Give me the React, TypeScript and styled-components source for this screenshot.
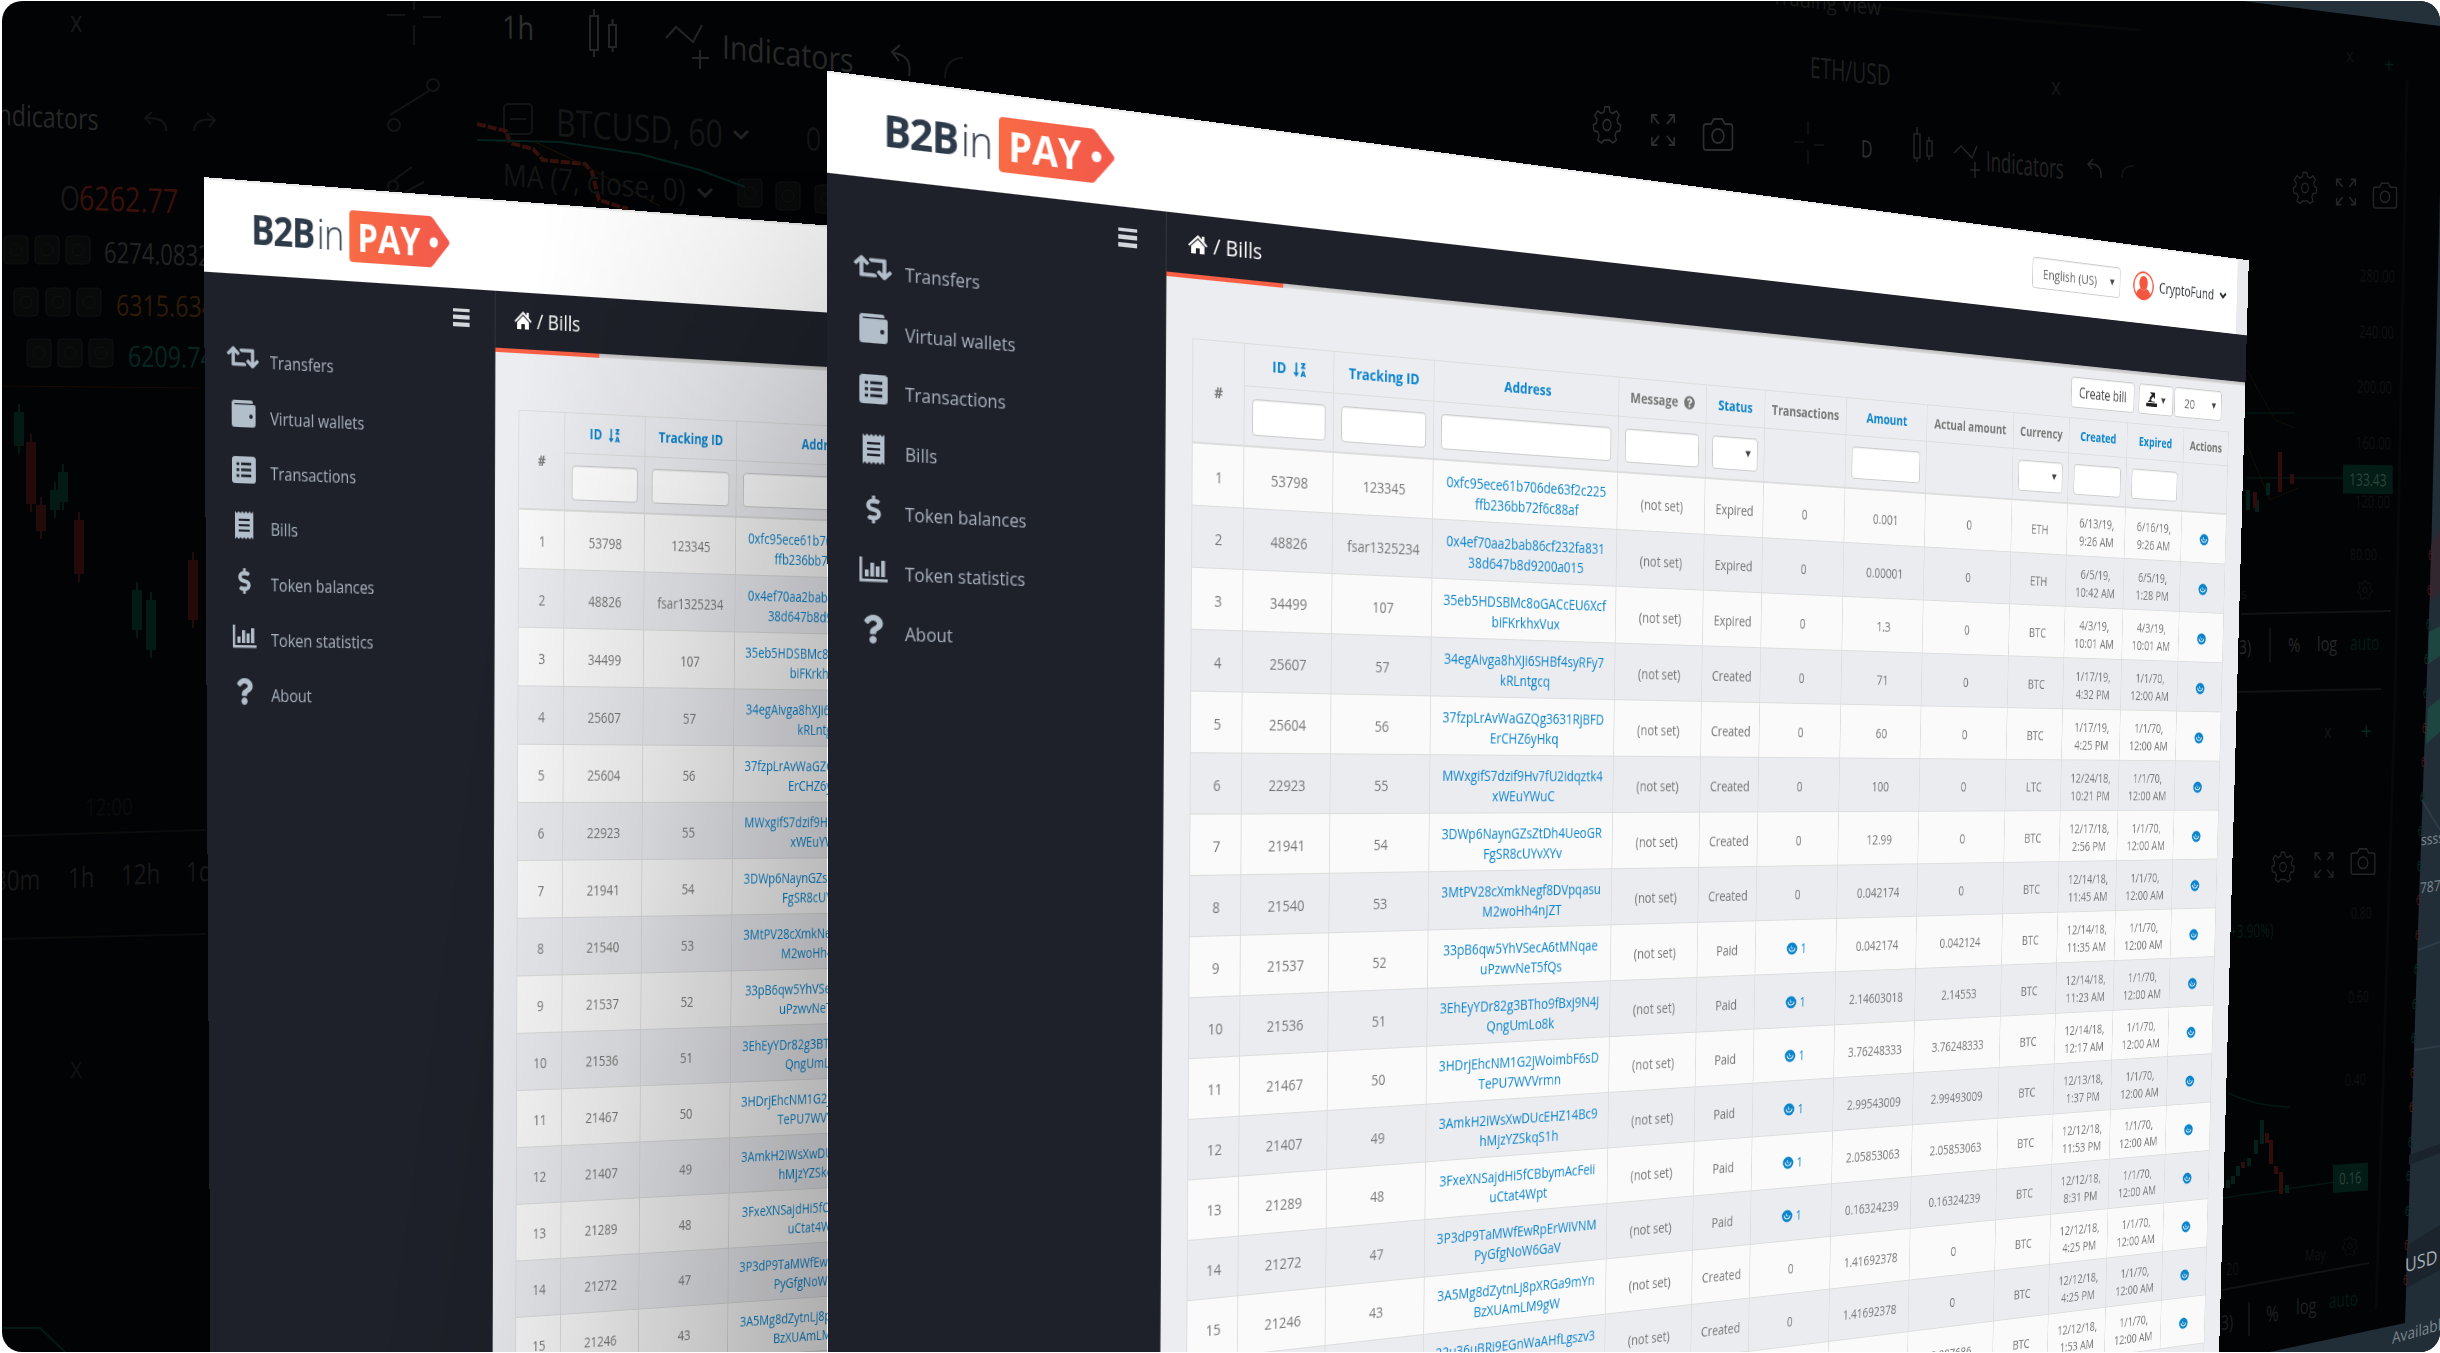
import React from "react";
import styled, { createGlobalStyle, css } from "styled-components";
import { FaRetweet, FaDollarSign, FaQuestion, FaSortAlphaDownAlt, FaQuestionCircle } from "react-icons/fa";

const GlobalStyle = createGlobalStyle`
  *, *::before, *::after { box-sizing: border-box; }
  html, body { margin: 0; padding: 0; background: #fff; overflow: hidden; }
`;

const FONT = `"Open Sans", "Noto Sans", sans-serif`;
const LINK = "#0b84cc";

/* ---------- perspective ---------- */

type Pt = [number, number];

/** Builds the matrix3d that carries the rectangle (x, y, w, h) onto a quad given clockwise from its top left. */
function project(x: number, y: number, w: number, h: number, q: [Pt, Pt, Pt, Pt]): string {
  const [p0, p1, p2, p3] = q;
  const dx1 = p1[0] - p2[0], dx2 = p3[0] - p2[0], sx = p0[0] - p1[0] + p2[0] - p3[0];
  const dy1 = p1[1] - p2[1], dy2 = p3[1] - p2[1], sy = p0[1] - p1[1] + p2[1] - p3[1];
  const det = dx1 * dy2 - dx2 * dy1;
  const g = (sx * dy2 - dx2 * sy) / det;
  const k = (dx1 * sy - sx * dy1) / det;
  const row = (c1: number, c3: number, c0: number) => {
    const u = (c1 * (1 + g) - c0) / w;
    const v = (c3 * (1 + k) - c0) / h;
    return [u, v, c0 - u * x - v * y];
  };
  const X = row(p1[0], p3[0], p0[0]);
  const Y = row(p1[1], p3[1], p0[1]);
  const gu = g / w, kv = k / h;
  const s = 1 - gu * x - kv * y;
  const n = (value: number) => (value / s).toFixed(10);
  return `matrix3d(${n(X[0])},${n(Y[0])},0,${n(gu)},${n(X[1])},${n(Y[1])},0,${n(kv)},0,0,1,0,${n(X[2])},${n(Y[2])},0,1)`;
}

const FRONT = project(352, 294, 1346, 912, [[1191.8, 443.3], [2226, 515], [2205, 1295.3], [1185.8, 1421.6]]);
const BACK = project(0, 0, 724, 1092, [[203.5, 177.1], [826.8, 225.4], [813.2, 1297.7], [210.4, 1338.9]]);

/* ---------- stage ---------- */

const Stage = styled.main`
  position: relative;
  width: 2440px;
  height: 1353px;
  overflow: hidden;
  background: #020304;
  clip-path: inset(1px 0 1px 2px round 20px);
  font-family: ${FONT};
`;

const Window = styled.section<{ $matrix: string }>`
  position: absolute;
  left: 0;
  top: 0;
  width: 1724px;
  height: 1400px;
  display: flex;
  flex-direction: column;
  background: #ecedf1;
  transform-origin: 0 0;
  transform: ${(p) => p.$matrix};
`;

const Shade = styled.div`
  position: absolute;
  left: 203px;
  top: 170px;
  width: 624px;
  height: 1183px;
  background: linear-gradient(98deg, rgba(0, 0, 0, 0) 44%, rgba(0, 0, 0, 0.1) 68%, rgba(0, 0, 0, 0.3) 100%);
  mask-image: linear-gradient(to bottom, rgba(0, 0, 0, 0.45), #000 28%);
`;

/* ---------- window header ---------- */

const Header = styled.header`
  display: flex;
  height: 86px;
  flex: none;
  border-top: 2px solid #ececec;
`;

const HeaderMain = styled.div`
  flex: 1;
  display: flex;
  align-items: center;
  background: #fff;
  padding: 0 17px 0 51px;
`;

const HeaderGutter = styled.div`
  width: 18px;
  background: #e9eaee;
`;

const Logo = styled.div`
  display: flex;
  align-items: center;
  color: #2d3a49;
  font-size: 38px;
  line-height: 48px;
  margin-right: auto;
`;

const LogoBold = styled.span`
  width: 72px;
  margin-top: -3px;
  font-weight: 700;
  letter-spacing: -1.3px;
`;

const LogoLight = styled.span`
  width: 36px;
  margin-top: -2px;
  font-weight: 300;
  letter-spacing: -0.5px;
`;

const LogoTag = styled.span`
  position: relative;
  display: flex;
  align-items: center;
  width: 113px;
  height: 48px;
  margin-top: -1px;
  padding-left: 9px;
  color: #fff;
  font-size: 36.5px;
  font-weight: 700;
`;

const TagShape = styled.svg`
  position: absolute;
  inset: 0;
`;

const TagText = styled.span`
  position: relative;
`;

const fieldBox = css`
  height: 34px;
  border: 1px solid #ccc;
  border-radius: 4px;
  background: #fff;
  box-shadow: inset 0 1px 1px rgba(0, 0, 0, 0.07);
`;

const Select = styled.div<{ $width?: number; $size?: number }>`
  ${fieldBox}
  display: flex;
  align-items: center;
  justify-content: space-between;
  width: ${(p) => (p.$width ? `${p.$width}px` : "auto")};
  padding: 0 8px 0 15px;
  color: #666;
  font-size: ${(p) => p.$size ?? 14}px;
`;

const User = styled.div`
  display: flex;
  align-items: center;
  margin-left: 20px;
  gap: 9px;
  color: #2d3038;
  font-size: 16px;
`;

/* ---------- window body ---------- */

const Body = styled.div`
  display: flex;
  flex: 1;
`;

const Sidebar = styled.aside`
  display: flex;
  flex-direction: column;
  width: 325px;
  background: #1e2129;
  border-right: 1px solid #33363c;
`;

const SidebarTop = styled.div`
  display: flex;
  justify-content: flex-end;
  align-items: center;
  height: 54px;
  padding-right: 29px;
`;

const Burger = styled.div`
  display: flex;
  flex-direction: column;
  justify-content: space-between;
  width: 19px;
  height: 17px;
  span { height: 3.6px; background: #d3d6da; }
`;

const MenuItem = styled.div`
  display: flex;
  align-items: center;
  height: 51.8px;
  padding-left: 27px;
  color: #a9b3bf;
  font-size: 16px;
`;

const MenuIcon = styled.span`
  display: flex;
  justify-content: center;
  width: 29px;
  margin: -6px 15px 0 0;
  color: #b3becb;
`;

const Content = styled.div`
  display: flex;
  flex-direction: column;
  flex: 1;
`;

const Crumbs = styled.div`
  display: flex;
  align-items: center;
  gap: 6px;
  height: 54px;
  padding: 0 0 2px 22px;
  background: #1e2129;
  color: #fff;
  font-size: 20.5px;
`;

const Underline = styled.div`
  height: 4px;
  background: linear-gradient(to right, #f85f45 122px, transparent 122px), linear-gradient(#bdbdbd, #dcdcdd);
`;

const Toolbar = styled.div`
  display: flex;
  justify-content: flex-end;
  gap: 7px;
  padding: 9px 38px 0 0;
`;

const ToolPair = styled.div`
  display: flex;
  gap: 2px;
`;

const ToolButton = styled.div`
  ${fieldBox}
  display: flex;
  align-items: center;
  justify-content: center;
  gap: 6px;
  min-width: 53px;
  padding: 0 11px;
  color: #444;
  font-size: 15.5px;
`;

/* ---------- table ---------- */

const COLUMNS = "54px 96px 112px 218.5px 110.5px 75.5px 109.5px 112px 125px 83px 89px 89px 72px";

const Table = styled.div`
  display: flex;
  flex-direction: column;
  width: 1347px;
  margin: 11px 0 0 27px;
  border: solid #ddd;
  border-width: 1px 0 0 1px;
`;

const Row = styled.div<{ $odd?: boolean }>`
  display: grid;
  grid-template-columns: ${COLUMNS};
  height: 57px;
  background: ${(p) => (p.$odd ? "#fafafa" : "#ebecf0")};
`;

const HeadRow = styled.div`
  display: grid;
  grid-template-columns: ${COLUMNS};
  grid-template-rows: 39px 56px;
`;

const Cell = styled.div<{ $link?: boolean }>`
  display: flex;
  align-items: center;
  justify-content: center;
  gap: 4px;
  padding: 3px 7px 0 9px;
  border: solid #ddd;
  border-width: 0 1px 1px 0;
  color: ${(p) => (p.$link ? LINK : "#777")};
  font-size: 14px;
  line-height: 20px;
  text-align: center;
  white-space: nowrap;
`;

const HeadCell = styled(Cell)<{ $tall?: boolean }>`
  grid-row: ${(p) => (p.$tall ? "1 / 3" : "auto")};
  padding: 0;
  gap: 7px;
  border-bottom-width: ${(p) => (p.$tall ? 2 : 1)}px;
  font-weight: 700;
`;

const FilterCell = styled(Cell)`
  padding: 1px 8px 0;
  border-bottom-width: 2px;
`;

const Input = styled.div`
  ${fieldBox}
  flex: 1;
`;

const FilterSelect = styled(Select)`
  flex: 1;
  justify-content: flex-end;
`;

/* ---------- icons ---------- */

const Caret = () => (
  <svg width="7" height="7" viewBox="0 0 7 7"><path d="M0 .5h7L3.5 7z" fill="#444" /></svg>
);

const Avatar = () => (
  <svg width="32" height="32" viewBox="0 0 32 32">
    <circle cx="16" cy="16" r="15" fill="#fff" stroke="#f4573f" strokeWidth="2" />
    <ellipse cx="16" cy="13" rx="6.6" ry="8" fill="#f4573f" />
    <path d="M5 26c1-5 4-6 7-7 2 3 6 3 8 0 3 1 6 2 7 7a15 15 0 0 1-22 0z" fill="#f4573f" />
  </svg>
);

const Home = () => (
  <svg width="20" height="19" viewBox="0 0 18 18" preserveAspectRatio="none">
    <path d="M9 1 0 9.6l1.2 1.2L9 3.6l7.8 7.2L18 9.6l-3-2.9V2h-2.3v2.5z" fill="#fff" />
    <path d="M9 5 2.8 10.7V17H7.2v-4.6h3.6V17h4.4v-6.3z" fill="#fff" />
  </svg>
);

const Eye = () => (
  <svg width="15" height="14" viewBox="0 0 15 14">
    <ellipse cx="7.5" cy="7" rx="7" ry="6.4" fill={LINK} />
    <path d="M3.4 6.400c.8 4.800 7.200 4.800 8.200 0" fill="none" stroke="#fff" strokeWidth="1.2" />
    <path d="M6.400 4.400c-.8 2.600 1.600 3.400 2.400 2" fill="none" stroke="#fff" strokeWidth="1" />
  </svg>
);

const Export = () => (
  <svg width="17" height="18" viewBox="0 0 17 18" fill="#222">
    <path d="M0 13h17v4H0zM3 11l3-2 3 2h4v1H3zM5 1h8v7l-2.6-2.4-4 4.4-2-2 4-4.400z" />
  </svg>
);

const Wallet = () => (
  <svg width="26" height="25" viewBox="0 0 26 25">
    <path d="M3 0h18a2 2 0 0 1 2 2v1H4v1h20a2 2 0 0 1 2 2v16a3 3 0 0 1-3 3H3a3 3 0 0 1-3-3V3a3 3 0 0 1 3-3z" fill="#b3becb" />
    <path d="M3 3.600h20" stroke="#1e2129" strokeWidth="1" />
    <circle cx="21" cy="15" r="1.900" fill="#1e2129" />
  </svg>
);

const ListIcon = () => (
  <svg width="26" height="25" viewBox="0 0 26 25">
    <rect width="26" height="25" rx="3" fill="#b3becb" />
    <path d="M5 7h3M5 12.500h3M5 18h3M10 7h11M10 12.500h11M10 18h11" stroke="#1e2129" strokeWidth="2.600" />
  </svg>
);

const Receipt = () => (
  <svg width="20" height="26" viewBox="0 0 20 26">
    <path d="M0 0l2 2 2-2 2 2 2-2 2 2 2-2 2 2 2-2 2 2 2-2v26l-2-2-2 2-2-2-2 2-2-2-2 2-2-2-2 2-2-2-2 2z" fill="#b3becb" />
    <path d="M4 8h12M4 13h12M4 18h12" stroke="#1e2129" strokeWidth="2" />
  </svg>
);

const Bars = () => (
  <svg width="26" height="22" viewBox="0 0 26 22" fill="#b3becb">
    <path d="M0 0h2.500v19H26v2.500H0zM5 11h3.500v6H5zM10 5h3.500v12H10zM15 8h3.500v9H15zM20 3h3.500v14H20z" />
  </svg>
);

/* ---------- data ---------- */

const MENU: [React.ReactNode, string][] = [
  [<FaRetweet size={35} style={{ flex: "none", transform: "scaleY(0.92)" }} />, "Transfers"],
  [<Wallet />, "Virtual wallets"],
  [<ListIcon />, "Transactions"],
  [<Receipt />, "Bills"],
  [<FaDollarSign size={24} />, "Token balances"],
  [<Bars />, "Token statistics"],
  [<FaQuestion size={25} />, "About"],
];

type Bill = [string, string, string, string, string, string, string, string, string, string, string];

const UNSET = "1/1/70,|12:00 AM";

/** id, tracking id, address, status, transactions, amount, actual amount, currency, created, expired, link flag */
const BILLS: Bill[] = [
  ["53798", "123345", "0xfc95ece61b706de63f2c225|ffb236bb72f6c88af", "Expired", "0", "0.001", "0", "ETH", "6/13/19,|9:26 AM", "6/16/19,|9:26 AM", ""],
  ["48826", "fsar1325234", "0x4ef70aa2bab86cf232fa831|38d647b8d9200a015", "Expired", "0", "0.00001", "0", "ETH", "6/5/19,|10:42 AM", "6/5/19,|1:28 PM", ""],
  ["34499", "107", "35eb5HDSBMc8oGACcEU6Xcf|biFKrkhxVux", "Expired", "0", "1.3", "0", "BTC", "4/3/19,|10:01 AM", "4/3/19,|10:01 AM", ""],
  ["25607", "57", "34egAivga8hXJi6SHBf4syRFy7|kRLntgcq", "Created", "0", "71", "0", "BTC", "1/17/19,|4:32 PM", UNSET, ""],
  ["25604", "56", "37fzpLrAvWaGZQg3631RjBFD|ErCHZ6yHkq", "Created", "0", "60", "0", "BTC", "1/17/19,|4:25 PM", UNSET, ""],
  ["22923", "55", "MWxgifS7dzif9Hv7fU2idqztk4|xWEuYWuC", "Created", "0", "100", "0", "LTC", "12/24/18,|10:21 PM", UNSET, ""],
  ["21941", "54", "3DWp6NaynGZsZtDh4UeoGR|FgSR8cUYvXYv", "Created", "0", "12.99", "0", "BTC", "12/17/18,|2:56 PM", UNSET, ""],
  ["21540", "53", "3MtPV28cXmkNegf8DVpqasu|M2woHh4nJZT", "Created", "0", "0.042174", "0", "BTC", "12/14/18,|11:45 AM", UNSET, ""],
  ["21537", "52", "33pB6qw5YhVSecA6tMNqae|uPzwvNeT5fQs", "Paid", "1", "0.042174", "0.042124", "BTC", "12/14/18,|11:35 AM", UNSET, "y"],
  ["21536", "51", "3EhEyYDr82g3BTho9fBxj9N4J|QngUmLo8k", "Paid", "1", "2.14603018", "2.14553", "BTC", "12/14/18,|11:23 AM", UNSET, "y"],
  ["21467", "50", "3HDrjEhcNM1G2jWoimbF6sD|TePU7WVVrmn", "Paid", "1", "3.76248333", "3.76248333", "BTC", "12/14/18,|12:17 AM", UNSET, "y"],
  ["21407", "49", "3AmkH2iWsXwDUcEHZ14Bc9|hMjzYZSkqS1h", "Paid", "1", "2.99543009", "2.99493009", "BTC", "12/13/18,|1:37 PM", UNSET, "y"],
  ["21289", "48", "3FxeXNSajdHi5fCBbymAcFeii|uCtat4Wpt", "Paid", "1", "2.05853063", "2.05853063", "BTC", "12/12/18,|11:53 PM", UNSET, "y"],
  ["21272", "47", "3P3dP9TaMWfEwRpErWiVNM|PyGfgNoW6GaV", "Paid", "1", "0.16324239", "0.16324239", "BTC", "12/12/18,|8:31 PM", UNSET, "y"],
  ["21246", "43", "3A5Mg8dZytnLj8pXRGa9mYn|BzXUAmLM9gW", "Created", "0", "1.41692378", "0", "BTC", "12/12/18,|4:25 PM", UNSET, ""],
  ["21245", "42", "22u36uBRj9EGnWaAHfLgszv3|kPqWcVbXe", "Created", "0", "1.41692378", "0", "BTC", "12/12/18,|4:25 PM", UNSET, ""],
  ["21240", "41", "3KmPdV7cXmkNegf8DVpqas|M2woHh4nJ", "Paid", "1", "0.987686", "0.987686", "BTC", "12/12/18,|1:53 AM", UNSET, "y"],
  ["21238", "40", "3MtPV28cXmkNegf8DVpqas|M2woHh4nJ", "Created", "0", "1", "0", "BTC", "12/12/18,|1:40 AM", UNSET, ""],
];

const HEADS: [string, boolean][] = [
  ["ID", true], ["Tracking ID", true], ["Address", true], ["Message", false], ["Status", true], ["Transactions", false],
  ["Amount", true], ["Actual amount", false], ["Currency", false], ["Created", true], ["Expired", true], ["Actions", false],
];

const FILTERS = ["input", "input", "input", "input", "select", "", "input", "", "select", "input", "input", ""];

const Lines = ({ text }: { text: string }) => (
  <span>
    {text.split("|").map((part, i) => (
      <React.Fragment key={i}>{i > 0 && <br />}{part}</React.Fragment>
    ))}
  </span>
);

const BillsTable = () => (
  <Table>
    <HeadRow>
      <HeadCell $tall>#</HeadCell>
      {HEADS.map(([label, link]) => (
        <HeadCell key={label} $link={link}>
          {label}
          {label === "ID" && <FaSortAlphaDownAlt size={15} />}
          {label === "Message" && <FaQuestionCircle size={14} />}
        </HeadCell>
      ))}
      {FILTERS.map((kind, i) => (
        <FilterCell key={i}>
          {kind === "input" && <Input />}
          {kind === "select" && <FilterSelect><Caret /></FilterSelect>}
        </FilterCell>
      ))}
    </HeadRow>
    {BILLS.map(([id, tracking, address, status, count, amount, actual, currency, created, expired, link], i) => (
      <Row key={id} $odd={i % 2 === 0}>
        <Cell>{i + 1}</Cell>
        <Cell>{id}</Cell>
        <Cell>{tracking}</Cell>
        <Cell $link><Lines text={address} /></Cell>
        <Cell>(not set)</Cell>
        <Cell>{status}</Cell>
        <Cell $link={!!link}>{link && <Eye />}{count}</Cell>
        <Cell>{amount}</Cell>
        <Cell>{actual}</Cell>
        <Cell>{currency}</Cell>
        <Cell><Lines text={created} /></Cell>
        <Cell><Lines text={expired} /></Cell>
        <Cell $link><Eye /></Cell>
      </Row>
    ))}
  </Table>
);

const BillsWindow = ({ matrix }: { matrix: string }) => (
  <Window $matrix={matrix}>
    <Header>
      <HeaderMain>
        <Logo>
          <LogoBold>B2B</LogoBold>
          <LogoLight>in</LogoLight>
          <LogoTag>
            <TagShape width="113" height="48" viewBox="0 0 113 48">
              <defs>
                <linearGradient id="tag" x1="0" x2="1"><stop offset="0" stopColor="#f96b45" /><stop offset="1" stopColor="#f2584b" /></linearGradient>
              </defs>
              <path d="M4 0h86q3 0 4.500 2.500L112 22q1.500 2 0 4L94.500 45.500Q93 48 90 48H4q-4 0-4-4V4q0-4 4-4z" fill="url(#tag)" />
              <circle cx="95" cy="24.500" r="4.800" fill="#fff" />
            </TagShape>
            <TagText>PAY</TagText>
          </LogoTag>
        </Logo>
        <Select $width={133} $size={15}>English (US)<Caret /></Select>
        <User>
          <Avatar />
          CryptoFund
          <svg width="11" height="8" viewBox="0 0 11 8"><path d="M1 1.500 5.500 6 10 1.500" fill="none" stroke="#23252c" strokeWidth="2.600" /></svg>
        </User>
      </HeaderMain>
      <HeaderGutter />
    </Header>
    <Body>
      <Sidebar>
        <SidebarTop><Burger><span /><span /><span /></Burger></SidebarTop>
        {MENU.map(([icon, label]) => (
          <MenuItem key={label}><MenuIcon>{icon}</MenuIcon>{label}</MenuItem>
        ))}
      </Sidebar>
      <Content>
        <Crumbs><Home /><span>/ Bills</span></Crumbs>
        <Underline />
        <Toolbar>
          <ToolButton>Create bill</ToolButton>
          <ToolPair>
            <ToolButton><Export /><Caret /></ToolButton>
            <Select $width={76} $size={15}>20<Caret /></Select>
          </ToolPair>
        </Toolbar>
        <BillsTable />
      </Content>
    </Body>
  </Window>
);

/* ---------- dim trading terminal behind the windows ---------- */

const Label = styled.span<{ $x: number; $y: number; $size: number; $color: string; $tilt?: number; $squeeze?: number }>`
  position: absolute;
  left: ${(p) => p.$x}px;
  top: ${(p) => p.$y}px;
  font-size: ${(p) => p.$size}px;
  line-height: 1;
  color: ${(p) => p.$color};
  white-space: pre;
  transform-origin: 0 50%;
  transform: translateY(-50%) skewY(${(p) => p.$tilt ?? 0}deg) scaleX(${(p) => p.$squeeze ?? 0.8});
`;

const PriceTag = styled(Label)`
  padding: 6px 9px;
  background: #031c16;
`;

const Backdrop = styled.svg`
  position: absolute;
  left: 0;
  top: 0;
`;

type Note = [string, number, number, number, string, number?, number?];

/** text, left, vertical centre, size, colour, tilt, horizontal squeeze */
const NOTES: Note[] = [
  ["x", 70, 21, 30, "#171a1a"],
  ["Indicators", -9, 113, 29, "#272828", 3, 0.8],
  ["O", 60, 197, 34, "#171919", 2, 0.75],
  ["6262.77", 79, 197, 34, "#3a100c", 2, 0.79],
  ["6274.0832", 104, 251, 29, "#222424", 2, 0.76],
  ["6315.634", 116, 304, 29, "#2f1b07", 1, 0.8],
  ["6209.747", 128, 355, 29, "#052722", 1, 0.8],
  ["1h", 502, 26, 32, "#2d2e2e", 4, 0.85],
  ["Indicators", 722, 46, 33, "#272828", 6, 0.86],
  ["BTCUSD, 60", 556, 121, 38, "#141616", 4, 0.8],
  ["O", 806, 138, 32, "#141616", 4, 0.6],
  ["MA (7, close, 0)", 503, 174, 31, "#141616", 5, 0.85],
  ["12:00", 85, 807, 24, "#0b0c0c", -1, 0.78],
  ["30m", -6, 880, 28, "#171818", -2, 0.8],
  ["1h", 68, 877, 28, "#171818", -2, 0.8],
  ["12h", 121, 874, 28, "#171818", -2, 0.8],
  ["1d", 186, 871, 28, "#171818", -2, 0.8],
  ["x", 70, 1067, 30, "#0f1111"],
  ["Trading View", 1772, -5, 22, "#1a1c1c", 6, 0.83],
  ["ETH/USD", 1810, 66, 29, "#1e2020", 6, 0.66],
  ["x", 2051, 86, 24, "#171919"],
  ["x", 2346, 55, 18, "#101212"],
  ["+", 2384, 63, 22, "#042017"],
  ["D", 1861, 148, 24, "#2f3131", 6, 0.66],
  ["Indicators", 1986, 160, 28, "#222424", 6, 0.6],
  ["280.00", 2360, 275, 17, "#101212", 2, 0.66],
  ["240.00", 2359, 331, 17, "#101212", 2, 0.66],
  ["200.00", 2357, 386, 17, "#101212", 2, 0.66],
  ["160.00", 2356, 442, 17, "#101212", 2, 0.66],
  ["120.00", 2355, 501, 17, "#101212", 1, 0.66],
  ["80.00", 2350, 554, 16, "#101212", 1, 0.66],
  ["s", 2241, 593, 15, "#101212"],
  ["3)", 2239, 647, 20, "#252727", 0, 0.7],
  ["%", 2288, 645, 20, "#252727", 0, 0.75],
  ["log", 2317, 644, 20, "#252727", 0, 0.72],
  ["auto", 2350, 643, 20, "#031c14", 0, 0.7],
  ["x", 2324, 731, 18, "#131515"],
  ["+", 2361, 731, 24, "#042a1e"],
  ["+3.90%)", 2230, 931, 18, "#031c16", -2, 0.66],
  ["0.80", 2351, 913, 16, "#101212", -2, 0.66],
  ["0.60", 2348, 997, 16, "#101212", -3, 0.66],
  ["0.40", 2345, 1080, 16, "#101212", -4, 0.66],
  ["May", 2305, 1255, 16, "#111313", -4, 0.66],
  ["20", 2226, 1269, 17, "#111313", -4, 0.66],
  ["3)", 2221, 1323, 20, "#1f2121", -5, 0.7],
  ["%", 2266, 1313, 22, "#1f2121", -5, 0.7],
  ["log", 2296, 1307, 21, "#1f2121", -5, 0.7],
  ["auto", 2329, 1301, 20, "#031c14", -5, 0.68],
];

const Gear = ({ x, y, s, c }: { x: number; y: number; s: number; c: string }) => (
  <g transform={`translate(${x} ${y}) scale(${s * 0.72} ${s})`} fill="none" stroke={c} strokeWidth="1.800">
    <path d="M-3-19h6l1 5 4 2 5-3 4 5-3 4 1 4 4 2-1 6-5 1-2 4 2 5-5 3-4-3h-8l-4 3-5-3 2-5-2-4-5-1-1-6 4-2 1-4-3-4 4-5 5 3 4-2z" transform="scale(1 .95)" />
    <circle r="5.500" />
  </g>
);

const Expand = ({ x, y, s, c }: { x: number; y: number; s: number; c: string }) => (
  <g transform={`translate(${x} ${y}) scale(${s * 0.8} ${s})`} fill="none" stroke={c} strokeWidth="2">
    <path d="M-14-7v-8h7M-14-15l9 9M14-7v-8H7M14-15l-9 9M-14 7v8h7M-14 15l9-9M14 7v8H7M14 15 5 6" />
  </g>
);

const Camera = ({ x, y, s, c }: { x: number; y: number; s: number; c: string }) => (
  <g transform={`translate(${x} ${y}) scale(${s * 0.85} ${s})`} fill="none" stroke={c} strokeWidth="2">
    <path d="M-14-11h6l3-5H5l3 5h6q3 0 3 3v20q0 3-3 3h-28q-3 0-3-3V-8q0-3 3-3z" /><circle cy="1" r="7" />
  </g>
);

const Candle = ({ x, y, h, up }: { x: number; y: number; h: number; up?: boolean }) => (
  <g fill={up ? "#031a15" : "#240a08"}>
    <rect x={x} y={y} width="10" height={h} />
    <rect x={x + 4} y={y - 8} width="2" height={h + 16} />
  </g>
);

const Terminal = () => (
  <>
    <Backdrop width="2440" height="1353" viewBox="0 0 2440 1353">
      <path d="M2235 0H2440V26z" fill="#24313b" />
      <path d="M2440 190 2431 560 2419 900 2405 1323 2265 1353H2440z" fill="#212e38" />
      <path d="M2431 545 2440 530v60l-10 14z" fill="#33272f" />
      <path d="M2429 632l11-6v30l-12 8zM2428 708l12-10v34l-14 12z" fill="#1d4640" />
      <path d="M2422 800 2440 830M2418 950l22-8M2415 1050l25-4" stroke="#2d3c46" strokeWidth="2" />
      <path d="M2409 1155l31-11v9l-31 12z" fill="#1a232b" />
      <path d="M2407 1245l33-20v45l-34 18z" fill="#1b242c" />
      <g fill="none" stroke="#242626" strokeWidth="2">
        <path d="M590 16h8v34h-8zM594 9v7M594 50v7M609 25h7v22h-7zM612.500 19v6M612.500 47v5M666 38l10-11 17 15 9-17M700 50v19M692 58h17M909 76q4-22-17-23M900 45l-8 7 7 9" />
        <path d="M1914 134h6v24h-6zM1917 127v7M1917 158v4M1927 141h5v15h-5zM1929 137v4M1929 156v4M1954 153l7-7 11 12 5-12M1975 162v16M1970 170h10M2101 178q1-15-12-14M2093 159l-5 5 4 5" strokeWidth="1.500" />
      </g>
      <g fill="none" stroke="#121515" strokeWidth="2">
        <path d="M387 15h18M423 17h18M414 0v10M414 25v20M390 115l39-24M166 131q1-14-20-13M152 112l-7 6 6 6M194 131q1-14 20-11M207 113l8 7-6 7M945 78q0-20 18-20" />
        <circle cx="394" cy="125" r="6" /><circle cx="433" cy="85" r="6" />
        <rect x="504" y="104" width="28" height="30" rx="4" /><path d="M510 119h16M394 180l18-13M402 194l22-12" />
        <circle cx="393" cy="186" r="5" />
        <path d="M734 131l7 7 7-7M698 189l7 7 7-7" stroke="#202323" strokeWidth="3" />
        <path d="M1794 142h10M1814 145h10M1808 121v14M1808 150v14M2122 178q0-13 12-12" strokeWidth="1.500" />
      </g>
      <g fill="#080a0a" stroke="#101212">
        {[[4, 250], [35, 250], [66, 250], [14, 302], [46, 302], [77, 302], [27, 353], [58, 353], [89, 353], [738, 193], [776, 196], [815, 199]].map(([x, y]) => (
          <g key={`${x}-${y}`}><rect x={x} y={y - 14} width="24" height="28" rx="4" /><circle cx={x + 12} cy={y} r="6" /></g>
        ))}
      </g>
      <path d="M0 386 200 388" stroke="#1a0a05" />
      <path d="M477 124 506 131 510 143 533 149 543 160 585 164 592 172 599 200 628 209" fill="none" stroke="#36100b" strokeWidth="4" strokeDasharray="9 2" />
      <path d="M477 140 560 142 640 154 700 170 745 187" fill="none" stroke="#04221e" strokeWidth="2" />
      <path d="M533 141 580 163 660 206" fill="none" stroke="#1f1305" />
      <Candle x={14} y={412} h={34} up /><Candle x={26} y={442} h={62} /><Candle x={36} y={505} h={26} />
      <Candle x={50} y={490} h={20} up /><Candle x={58} y={472} h={30} up /><Candle x={74} y={520} h={54} />
      <Candle x={132} y={590} h={40} up /><Candle x={146} y={600} h={50} up /><Candle x={188} y={560} h={60} />
      <path d="M0 836 206 830M0 939 206 934" stroke="#0b0d0d" strokeWidth="2" />
      <path d="M2 1328h38l26 25" fill="none" stroke="#021a15" strokeWidth="2" />
      <Gear x={1607} y={125} s={1} c="#2c2d2d" /><Expand x={1663} y={130} s={1} c="#2c2d2d" /><Camera x={1718} y={135} s={1} c="#2c2d2d" />
      <Gear x={2305} y={188} s={0.860} c="#242626" /><Expand x={2346} y={192} s={0.840} c="#242626" /><Camera x={2385} y={196} s={0.800} c="#242626" />
      <Gear x={2283} y={867} s={0.820} c="#242626" /><Expand x={2324} y={865} s={0.800} c="#242626" /><Camera x={2363} y={862} s={0.820} c="#242626" />
      <Gear x={2365} y={590} s={0.520} c="#121414" /><Gear x={2350} y={1246} s={0.520} c="#121414" />
      <path d="M2241 614 2391 611M2236 692 2381 689M2222 1290 2369 1263M2270 628v34M2249 1302v34" fill="none" stroke="#101313" strokeWidth="2" />
      <path d="M2247 370 2275 420 2295 428M2247 445 2270 500 2298 488" fill="none" stroke="#150d04" />
      <path d="M2247 413h48M2247 478h100M2222 1198 2335 1182M2228 1093q30 14 62 14" fill="none" stroke="#031713" strokeWidth="1.500" />
      <path d="M2248 490v20M2257 500v12M2268 483v12" stroke="#03201a" strokeWidth="4" />
      <path d="M2255 492v16M2280 452v40M2292 474v10" stroke="#300d0a" strokeWidth="4" />
      <path d="M2228 1180v8M2233 1176v8M2238 1166v10M2249 1158v8M2256 1140v14M2262 1120v24M2287 1185v8" stroke="#03201a" strokeWidth="4" />
      <path d="M2243 1162v6M2267 1133v10M2271 1140v24M2276 1166v8M2281 1172v22" stroke="#300d0a" strokeWidth="4" />
      <path d="M2140 30 1790 0M2407 80 2395 700 2376 1310" fill="none" stroke="#070909" strokeWidth="3" />
    </Backdrop>
    {NOTES.map(([text, x, y, size, color, tilt, squeeze], i) => (
      <Label key={i} $x={x} $y={y} $size={size} $color={color} $tilt={tilt} $squeeze={squeeze}>{text}</Label>
    ))}
    {Array.from({ length: 22 }, (_, i) => (
      <Label key={`edge${i}`} $x={2428 - i * 1.2} $y={555 + i * 34.500} $size={14} $color={i % 5 < 2 ? "#4a1c1c" : "#0a3024"} $squeeze={0.6}>6</Label>
    ))}
    <PriceTag $x={2343} $y={479} $size={17} $color="#2c443d" $tilt={1} $squeeze={0.7}>133.43</PriceTag>
    <PriceTag $x={2333} $y={1179} $size={16} $color="#2c443d" $tilt={-4} $squeeze={0.7}>0.16</PriceTag>
    <Label $x={2421} $y={840} $size={15} $color="#7d868c" $tilt={-8}>ssss</Label>
    <Label $x={2420} $y={888} $size={15} $color="#7d868c" $tilt={-8}>787</Label>
    <Label $x={2405} $y={1266} $size={19} $color="#a9afb3" $tilt={-16} $squeeze={0.85}>USD</Label>
    <Label $x={2392} $y={1338} $size={16} $color="#7d868c" $tilt={-16} $squeeze={0.85}>Available</Label>
  </>
);

export default function App() {
  return (
    <>
      <GlobalStyle />
      <Stage>
        <Terminal />
        <BillsWindow matrix={BACK} />
        <Shade />
        <BillsWindow matrix={FRONT} />
      </Stage>
    </>
  );
}
